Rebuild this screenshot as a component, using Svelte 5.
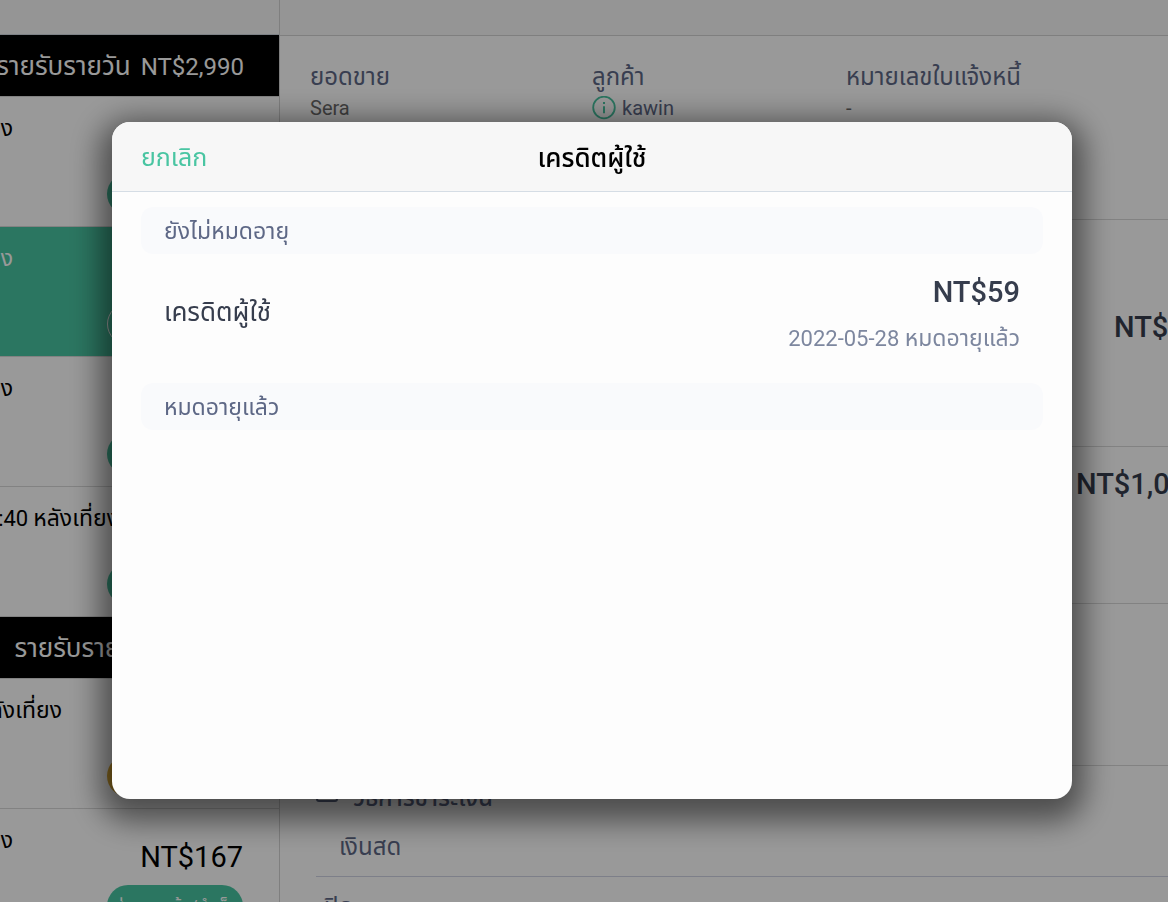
<script>
	const days = [
		{ total: 'NT$2,990', label: 'รายรับรายวัน', orders: [
			{ time: 'หลังเที่ยง', width: 13, status: 'paid' },
			{ time: 'หลังเที่ยง', width: 13, status: 'selected' },
			{ time: 'หลังเที่ยง', width: 13, status: 'paid' },
			{ hour: '12:40', time: 'หลังเที่ยง', width: 119, status: 'paid' }
		] },
		{ total: 'NT$167', label: 'รายรับรายวัน', orders: [
			{ time: 'หลังเที่ยง', width: 62, status: 'pending' },
			{ time: 'หลังเที่ยง', width: 13, status: 'paid', amount: 'NT$167', badge: 'ส่งมอบแล้ว/สำเร็จ' }
		] }
	]
</script>

<div class="app">
	<aside class="orders">
		<div class="bar"></div>
		{#each days as day}
			<div class="day">
				<span class="label">{day.label}</span>
				<span>{day.total}</span>
			</div>
			{#each day.orders as order}
				<div class="order {order.status}">
					<div class="top">
						<div class="time" style={`width:${order.width}px`}>
							{#if order.hour}<span class="hour">{order.hour}</span>{/if}
							<span>{order.time}</span>
						</div>
						<div class="amount">{order.amount ?? ''}</div>
					</div>
					<div class="badge">{order.badge ?? ''}</div>
				</div>
			{/each}
		{/each}
	</aside>

	<main class="detail">
		<div class="bar"></div>
		<section class="info">
			<div>
				<h2>ยอดขาย</h2>
				<p>Sera</p>
			</div>
			<div>
				<h2>ลูกค้า</h2>
				<p class="customer">
					<svg width="24" height="24" viewBox="0 0 24 24" fill="none" stroke="currentColor" stroke-width="1.8">
						<circle cx="12" cy="11.5" r="10.8" />
						<path d="M12 10.2V17.2M12 6V8" stroke-width="2" />
					</svg>
					kawin
				</p>
			</div>
			<div>
				<h2>หมายเลขใบแจ้งหนี้</h2>
				<p>-</p>
			</div>
		</section>
		<section class="product"><strong>NT$59</strong></section>
		<section class="total"><strong>NT$1,059</strong></section>
		<section class="notes"></section>
		<section class="payment">
			<h3>
				<svg width="22" height="20" viewBox="0 0 22 20" fill="none" stroke="currentColor" stroke-width="2">
					<rect x="1" y="1" width="20" height="18" rx="2" />
					<path d="M1 7H21" />
				</svg>
				วิธีการชำระเงิน
			</h3>
			<p>เงินสด</p>
			<div class="close">ปิด</div>
		</section>
	</main>
</div>

<div class="overlay">
	<div class="dialog" role="dialog" aria-modal="true" aria-labelledby="title">
		<header>
			<button type="button">ยกเลิก</button>
			<h1 id="title">เครดิตผู้ใช้</h1>
		</header>
		<div class="body">
			<h2>ยังไม่หมดอายุ</h2>
			<div class="credit">
				<span class="name">เครดิตผู้ใช้</span>
				<div class="value">
					<strong>NT$59</strong>
					<span class="expiry">2022-05-28 <span>หมดอายุแล้ว</span></span>
				</div>
			</div>
			<h2>หมดอายุแล้ว</h2>
		</div>
	</div>
</div>

<style>
	:global(body) {
		overflow: hidden;
	}

	.app,
	.overlay {
		box-sizing: border-box;
		font-family: Roboto, "Noto Sans Thai", "Noto Sans", sans-serif;
		font-size: 24px;
		line-height: 32px;
	}

	h1, h2, h3, p {
		margin: 0;
		font-size: inherit;
		font-weight: 400;
	}

	.app {
		display: flex;
		height: 100vh;
		overflow: hidden;
		background: #fff;
		color: #5e6886;
	}

	.orders {
		flex: none;
		width: 279px;
		border-right: 1px solid #d4d4d4;
		color: #000;
	}

	.bar {
		height: 34px;
		background: #f8f8f8;
		border-bottom: 1px solid #d0d8e0;
	}

	.detail .bar {
		height: 35px;
		border-color: #d4d4d4;
	}

	.day {
		display: flex;
		justify-content: flex-end;
		align-items: baseline;
		gap: 10px;
		box-sizing: border-box;
		height: 62px;
		padding: 15px 35px 0 0;
		border-bottom: 1px solid #d9d9d9;
		background: #000;
		background-clip: padding-box;
		color: #fff;
		white-space: nowrap;
	}

	.label {
		font-size: 26px;
	}

	.order {
		display: flex;
		flex-direction: column;
		box-sizing: border-box;
		height: 130px;
		padding: 15px 36px 0 0;
		border-bottom: 1px solid #d9d9d9;
	}

	.top {
		display: flex;
		justify-content: space-between;
		height: 61px;
	}

	.time {
		display: flex;
		flex: none;
		justify-content: flex-end;
		align-items: baseline;
		gap: 5px;
		overflow: hidden;
		font-size: 23px;
		line-height: 34px;
		white-space: nowrap;
	}

	.hour {
		font-size: 22px;
	}

	.amount {
		padding-top: 17px;
		font-size: 29px;
	}

	.badge {
		flex: none;
		align-self: flex-end;
		box-sizing: border-box;
		width: 136px;
		height: 42px;
		border-radius: 21px;
		background: #49c5a2;
		color: #fff;
		font-size: 17px;
		line-height: 42px;
		text-align: center;
		white-space: nowrap;
	}

	.selected {
		background: #49c5a2;
		color: #fff;
	}

	.selected .badge {
		border: 1px solid #fff;
	}

	.pending .badge {
		background: #e0ac35;
	}

	.detail {
		flex: 1;
		min-width: 0;
	}

	section {
		box-sizing: border-box;
		border-bottom: 1px solid #d9d9d9;
	}

	.info {
		display: grid;
		grid-template-columns: 282px 254px 1fr;
		height: 184px;
		padding: 24px 0 0 30px;
	}

	.info h2 {
		line-height: 34px;
	}

	.info p {
		color: #6b6b6b;
		font-size: 20px;
		line-height: 28px;
	}

	.info .customer {
		display: flex;
		align-items: center;
		gap: 6px;
		color: #5e6886;
	}

	.customer svg {
		color: #49c5a2;
	}

	.product,
	.total {
		overflow: hidden;
		color: #363d4d;
		font-size: 29px;
		white-space: nowrap;
	}

	strong {
		font-weight: 500;
	}

	.product {
		height: 227px;
		padding: 91px 0 0 834px;
	}

	.total {
		height: 157px;
		padding: 21px 0 0 796px;
	}

	.notes {
		height: 162px;
	}

	.payment {
		height: 200px;
		padding: 16px 0 0 36px;
	}

	.payment h3 {
		display: flex;
		align-items: flex-start;
		gap: 15px;
		font-weight: 500;
	}

	.payment p {
		padding: 17px 0 13px 23px;
		border-bottom: 1px solid #d0d4e4;
	}

	.close {
		padding: 14px 8px;
	}

	.overlay {
		position: fixed;
		inset: 0;
		display: flex;
		padding: 122px 96px 103px 112px;
		background: rgba(0, 0, 0, .4);
	}

	.dialog {
		flex: 1;
		overflow: hidden;
		border-radius: 18px;
		background: #fdfdfd;
		box-shadow: 0 10px 30px 12px rgba(0, 0, 0, .5);
	}

	header {
		display: grid;
		grid-template-columns: 1fr auto 1fr;
		align-items: center;
		box-sizing: border-box;
		height: 70px;
		padding: 2px 29px 0;
		border-bottom: 1px solid #d5dde5;
		background: #f7f7f7;
		font-size: 26px;
	}

	header button {
		justify-self: start;
		padding: 0;
		border: 0;
		background: none;
		color: #49c5a2;
		font: inherit;
		font-size: 25px;
		cursor: pointer;
	}

	header h1 {
		color: #000;
		font-weight: 500;
	}

	.body {
		padding: 15px 29px;
	}

	.body h2 {
		padding: 9px 23px 6px;
		border-radius: 12px;
		background: #f9fafc;
		color: #5e6886;
		font-size: 23px;
	}

	.credit {
		display: flex;
		justify-content: space-between;
		box-sizing: border-box;
		height: 129px;
		padding: 22px 23px 0;
		color: #363d4d;
	}

	.name {
		padding-top: 20px;
		font-size: 26px;
	}

	.value {
		display: flex;
		flex-direction: column;
		gap: 15px;
		text-align: right;
	}

	.value strong {
		font-size: 29px;
	}

	.expiry {
		color: #7d879f;
		font-size: 22px;
	}

	.expiry span {
		font-size: 23px;
	}
</style>
